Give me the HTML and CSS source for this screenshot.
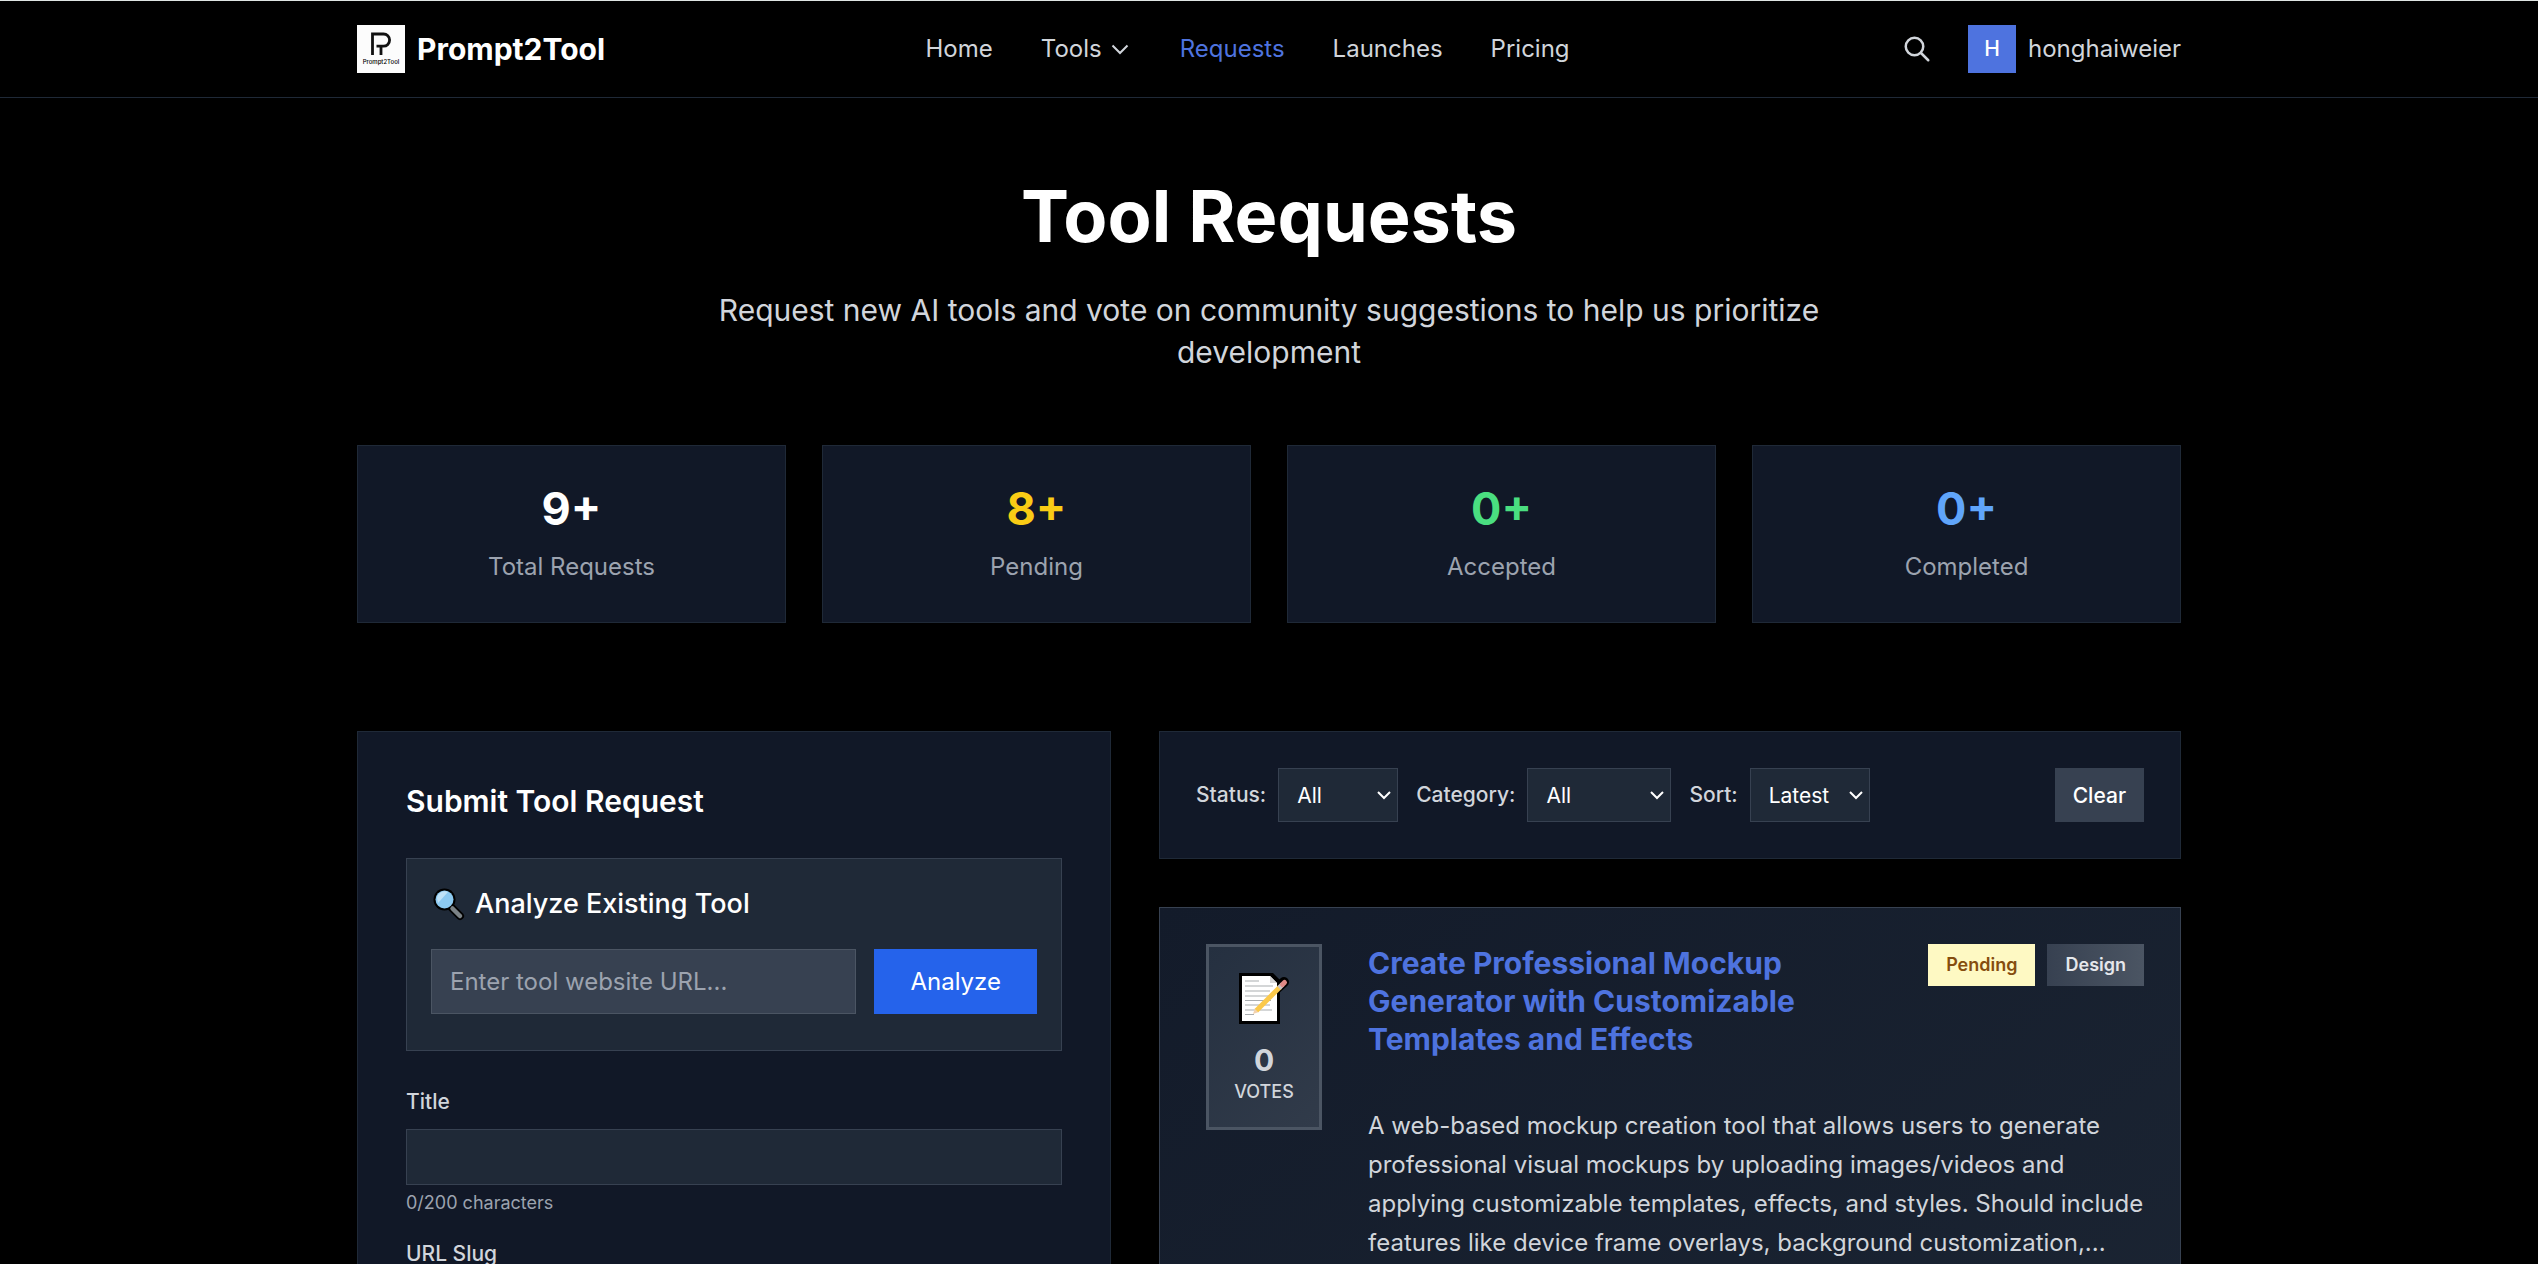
FILE: index.html
```html
<!DOCTYPE html>
<html lang="en">
<head>
<meta charset="UTF-8">
<meta name="viewport" content="width=device-width, initial-scale=1.0">
<title>Tool Requests - Prompt2Tool</title>
<link rel="stylesheet" href="styles.css">
</head>
<body>
  <header class="header">
    <div class="container header-inner">
      <a href="#" class="brand">
        <svg class="brand-logo" viewBox="0 0 48 48" aria-hidden="true">
          <rect width="48" height="48" fill="#fcfcfc"/>
          <path d="M15.500 30V9H26.500a6 6 0 0 1 0 12.200H19.500M24 30V21" fill="none" stroke="#111" stroke-width="2.800"/>
          <text x="24" y="39" class="brand-logo-text" text-anchor="middle">Prompt2Tool</text>
        </svg>
        <span>Prompt2Tool</span>
      </a>
      <nav class="nav">
        <a href="#">Home</a>
        <a href="#" class="nav-drop">Tools
          <svg width="24" height="24" viewBox="0 0 24 24" aria-hidden="true"><path d="M4.500 8.500l7.500 7.500 7.500-7.500" fill="none" stroke="currentColor" stroke-width="2"/></svg>
        </a>
        <a href="#" class="active">Requests</a>
        <a href="#">Launches</a>
        <a href="#">Pricing</a>
      </nav>
      <div class="account">
        <button class="search-button" aria-label="Search">
          <svg width="30" height="30" viewBox="0 0 24 24" aria-hidden="true"><path d="M21 21l-6-6m2-5a7 7 0 11-14 0 7 7 0 0114 0z" fill="none" stroke="currentColor" stroke-width="2" stroke-linecap="round"/></svg>
        </button>
        <a href="#" class="user"><span class="avatar">H</span>honghaiweier</a>
      </div>
    </div>
  </header>

  <main class="container">
    <section class="hero">
      <h1>Tool Requests</h1>
      <p>Request new AI tools and vote on community suggestions to help us prioritize development</p>
    </section>

    <section class="stats">
      <div class="stat"><div class="stat-number">9+</div><div class="stat-label">Total Requests</div></div>
      <div class="stat"><div class="stat-number yellow">8+</div><div class="stat-label">Pending</div></div>
      <div class="stat"><div class="stat-number green">0+</div><div class="stat-label">Accepted</div></div>
      <div class="stat"><div class="stat-number blue">0+</div><div class="stat-label">Completed</div></div>
    </section>

    <div class="columns">
      <section class="panel submit">
        <h2>Submit Tool Request</h2>
        <div class="analyze">
          <h3>
            <svg class="emoji" viewBox="0 0 34 34" aria-hidden="true">
              <path d="M21 21l8 8" stroke="#000" stroke-width="8" stroke-linecap="round"/>
              <circle cx="13.500" cy="12.500" r="11" fill="#000"/>
              <path d="M21.500 21.500l7.500 7.500" stroke="#7b8286" stroke-width="4.500" stroke-linecap="round"/>
              <circle cx="13.500" cy="12.500" r="9" fill="#8cc9f0"/>
              <path d="M6 11a8 8 0 0 1 11-6L7 16z" fill="#bfe2f7"/>
            </svg>
            Analyze Existing Tool
          </h3>
          <div class="analyze-row">
            <input type="text" class="url-input" aria-label="Tool website URL" placeholder="Enter tool website URL...">
            <button class="analyze-button">Analyze</button>
          </div>
        </div>
        <label for="title">Title</label>
        <input type="text" id="title" class="field">
        <div class="hint">0/200 characters</div>
        <label for="slug">URL Slug</label>
        <input type="text" id="slug" class="field">
      </section>

      <div class="list">
        <section class="panel filters">
          <label for="status">Status:</label>
          <select id="status"><option>All</option></select>
          <label for="category">Category:</label>
          <select id="category" class="wide"><option>All</option></select>
          <label for="sort">Sort:</label>
          <select id="sort"><option>Latest</option></select>
          <button class="clear">Clear</button>
        </section>

        <article class="panel card">
          <button class="vote">
            <svg class="vote-icon" viewBox="0 0 51 51" aria-hidden="true">
              <path d="M0 0h34l7 7v44H0z" fill="#000"/>
              <path d="M45 9L36 17" stroke="#000" stroke-width="10" stroke-linecap="round"/>
              <path d="M3 3h28l7 7v38H3z" fill="#fff"/>
              <path d="M31 3l7 7h-7z" fill="#d8d8d8"/>
              <path d="M6 8h14M6 13h28M6 18h25M6 23h28M6 27.500h26M6 32h25M6 37h27M6 41.500h9" stroke="#a9adb0" stroke-width="1.200"/>
              <path d="M14 41l2-6 4 4z" fill="#f3d2ae"/>
              <path d="M17.500 37.500L41 14" stroke="#fbc94a" stroke-width="5"/>
              <path d="M40 15l3.500-3.500" stroke="#c9c3c3" stroke-width="5"/>
              <path d="M43.500 11.500l2-2" stroke="#e08a86" stroke-width="5" stroke-linecap="round"/>
            </svg>
            <span class="vote-count">0</span>
            <span class="vote-label">VOTES</span>
          </button>
          <div class="card-body">
            <div class="card-head">
              <h3><a href="#">Create Professional Mockup Generator with Customizable Templates and Effects</a></h3>
              <div class="badges">
                <span class="badge pending">Pending</span>
                <span class="badge category">Design</span>
              </div>
            </div>
            <p>A web-based mockup creation tool that allows users to generate professional visual mockups by uploading images/videos and applying customizable templates, effects, and styles. Should include features like device frame overlays, background customization,...</p>
          </div>
        </article>
      </div>
    </div>
  </main>
</body>
</html>
```
FILE: styles.css
```css
* {
  box-sizing: border-box;
}
body {
  margin: 0;
  height: 100vh;
  overflow: hidden;
  background-color: #000;
  color: #d1d5db;
  font-family: Inter, "Liberation Sans", sans-serif;
  font-size: 24px;
  line-height: 36px;
}
h1, h2, h3, p {
  margin: 0;
}
a {
  color: inherit;
  text-decoration: none;
}
svg {
  display: block;
}
button, input, select {
  font-family: inherit;
  border-radius: 0;
}
button {
  border: none;
  cursor: pointer;
}
.container {
  max-width: 1920px;
  margin: 0 auto;
  padding: 0 48px;
}

/* Header */
.header {
  border-top: 1px solid #dfe5e3;
  border-bottom: 1px solid #1f2937;
}
.header-inner {
  display: flex;
  justify-content: space-between;
  align-items: center;
  height: 96px;
}
.brand {
  display: flex;
  align-items: center;
  gap: 12px;
  color: #fff;
  font-size: 30px;
  font-weight: 700;
}
.brand-logo {
  width: 48px;
  height: 48px;
}
.brand-logo-text {
  font-size: 6px;
  font-weight: 500;
}
.nav {
  display: flex;
  gap: 48px;
}
.nav-drop {
  display: flex;
  align-items: center;
  gap: 6px;
}
.active {
  color: #4e73df;
}
.account {
  display: flex;
  align-items: center;
  gap: 24px;
}
.search-button {
  padding: 12px;
  background: none;
  color: #d1d5db;
}
.user {
  display: flex;
  align-items: center;
  gap: 12px;
}
.avatar {
  width: 48px;
  background-color: #4e73df;
  color: #fff;
  font-size: 21px;
  font-weight: 500;
  line-height: 48px;
  text-align: center;
}

/* Hero */
.hero {
  padding: 73px 0 72px;
  text-align: center;
}
.hero h1 {
  margin-bottom: 28px;
  color: #fff;
  font-size: 72px;
  font-weight: 700;
  line-height: 90px;
}
.hero p {
  max-width: 1152px;
  margin: 0 auto;
  font-size: 30px;
  line-height: 42px;
}

/* Stats */
.stats {
  display: grid;
  grid-template-columns: repeat(4, 1fr);
  gap: 36px;
  margin-bottom: 108px;
}
.stat {
  padding: 36px;
  background-color: #111827;
  border: 1px solid #1f2937;
  text-align: center;
}
.stat-number {
  margin-bottom: 12px;
  color: #fff;
  font-size: 45px;
  font-weight: 700;
  line-height: 54px;
}
.stat-label {
  color: #9ca3af;
  line-height: 38px;
}
.yellow {
  color: #facc15;
}
.green {
  color: #4ade80;
}
.blue {
  color: #60a5fa;
}

/* Two columns */
.columns {
  display: grid;
  grid-template-columns: 377fr 511fr;
  gap: 48px;
}
.panel {
  background-color: #111827;
  border: 1px solid #1f2937;
}
.submit {
  padding: 48px;
}
.submit h2 {
  margin-bottom: 36px;
  color: #fff;
  font-size: 30px;
  font-weight: 600;
  line-height: 42px;
}
.analyze {
  margin-bottom: 36px;
  padding: 24px 24px 36px;
  background-color: #1f2937;
  border: 1px solid #374151;
}
.analyze h3 {
  display: flex;
  align-items: center;
  gap: 10px;
  margin-bottom: 24px;
  color: #fff;
  font-size: 27px;
  font-weight: 500;
  line-height: 42px;
}
.emoji {
  width: 34px;
  height: 34px;
}
.analyze-row {
  display: flex;
  gap: 18px;
}
.url-input {
  flex: 1;
  min-width: 0;
  height: 65px;
  padding: 0 18px;
  background-color: #374151;
  border: 1px solid #4b5563;
  color: #fff;
  font-size: 24px;
}
.url-input::placeholder {
  color: #9ca3af;
}
.analyze-button {
  padding: 0 36px;
  background-color: #2563eb;
  color: #fff;
  font-size: 24px;
}
.submit label {
  display: block;
  margin-bottom: 12px;
  font-size: 21px;
  font-weight: 500;
  line-height: 30px;
}
.field {
  display: block;
  width: 100%;
  height: 56px;
  background-color: #1f2937;
  border: 1px solid #374151;
}
.hint {
  margin: 6px 0 24px;
  color: #9ca3af;
  font-size: 18px;
  line-height: 24px;
}

/* Filters */
.filters {
  display: flex;
  align-items: center;
  margin-bottom: 48px;
  padding: 36px;
  font-size: 21px;
  font-weight: 500;
}
.filters select {
  appearance: none;
  width: 120px;
  height: 54px;
  margin: 0 18px 0 12px;
  padding: 0 18px;
  background: #1f2937 url("data:image/svg+xml,%3Csvg xmlns='http://www.w3.org/2000/svg' width='16' height='10'%3E%3Cpath d='M2 2l6 6 6-6' fill='none' stroke='white' stroke-width='2'/%3E%3C/svg%3E") no-repeat right 5px center;
  border: 1px solid #374151;
  color: #fff;
  font-size: 21px;
}
.filters .wide {
  width: 144px;
}
.clear {
  height: 54px;
  margin-left: auto;
  padding: 0 18px;
  background-color: #374151;
  color: #fff;
  font-size: 21px;
  font-weight: 500;
}

/* Request card */
.card {
  display: flex;
  align-items: flex-start;
  gap: 46px;
  padding: 36px 36px 36px 46px;
  background: linear-gradient(145deg, #131b2a, #1f2937 160%);
  border-color: #374151;
}
.vote {
  flex: none;
  display: flex;
  flex-direction: column;
  align-items: center;
  width: 116px;
  height: 186px;
  padding: 26px 0 0;
  background: linear-gradient(135deg, #253040, #313b4a);
  border: 3px solid #4b5563;
  color: #d1d5db;
}
.vote-icon {
  width: 51px;
  height: 51px;
  margin-bottom: 18px;
}
.vote-count {
  font-size: 30px;
  font-weight: 700;
  line-height: 36px;
}
.vote-label {
  font-size: 18px;
  font-weight: 500;
  line-height: 28px;
}
.card-body {
  flex: 1;
}
.card-head {
  display: flex;
  justify-content: space-between;
  align-items: flex-start;
  gap: 24px;
  margin-bottom: 48px;
}
.card-head h3 {
  color: #4e73df;
  font-size: 30px;
  font-weight: 700;
  line-height: 38px;
}
.badges {
  flex: none;
  display: flex;
  gap: 12px;
}
.badge {
  padding: 9px 18px;
  font-size: 18px;
  font-weight: 600;
  line-height: 24px;
}
.pending {
  background-color: #fef9c3;
  color: #854d0e;
}
.category {
  background: linear-gradient(90deg, #374151, #4b5563);
  color: #e5e7eb;
}
.card-body p {
  line-height: 39px;
}
```
